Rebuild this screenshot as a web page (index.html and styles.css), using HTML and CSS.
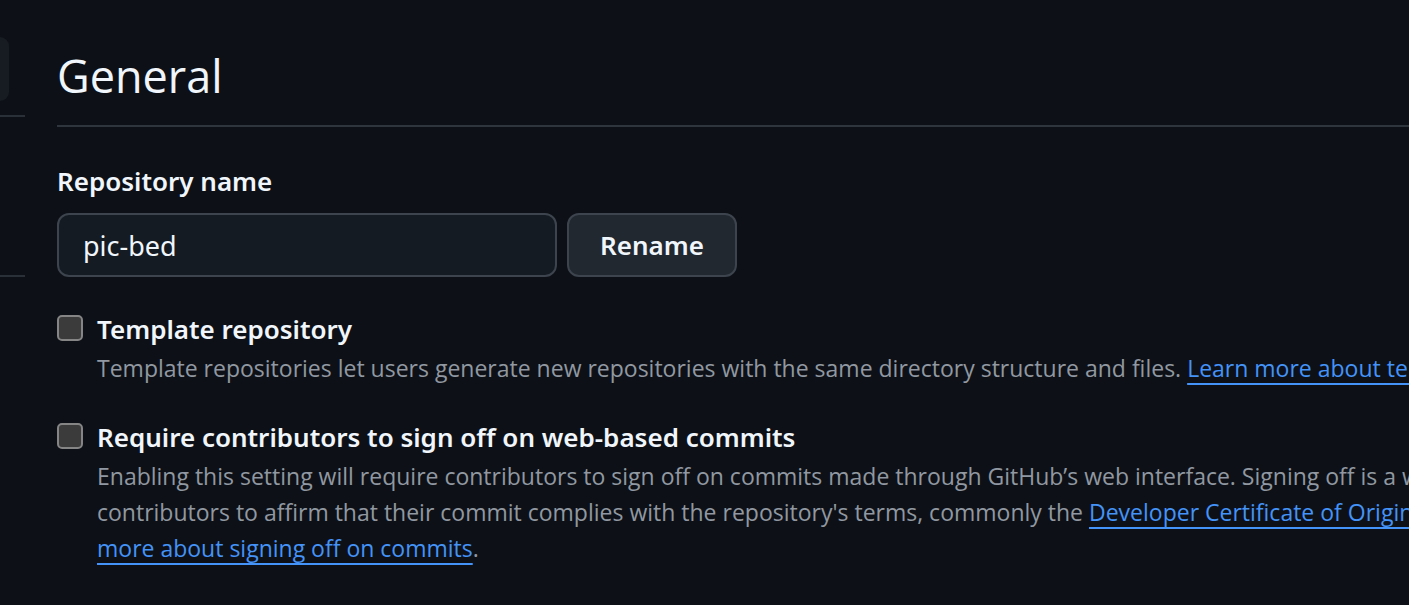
FILE: index.html
```html
<!DOCTYPE html>
<html lang="en">
<head>
<meta charset="utf-8">
<title>General settings</title>
<link rel="stylesheet" href="styles.css">
</head>
<body>
<div class="page">
  <aside class="sidebar" aria-label="Settings sections">
    <div class="nav-item"></div>
    <hr class="nav-divider">
    <hr class="nav-divider nav-divider-far">
  </aside>
  <main class="content">
    <h1 class="title">General</h1>
    <form class="rename">
      <label class="label" for="name">Repository name</label>
      <div class="row">
        <input class="text-input" id="name" type="text" value="pic-bed">
        <button class="button" type="button">Rename</button>
      </div>
    </form>
    <section class="option">
      <input class="check" id="template" type="checkbox">
      <div class="option-body">
        <label class="label" for="template">Template repository</label>
        <p class="note">Template repositories let users generate new repositories with the same directory structure and files. <a class="link" href="#">Learn more about templates</a></p>
      </div>
    </section>
    <section class="option">
      <input class="check" id="signoff" type="checkbox">
      <div class="option-body">
        <label class="label" for="signoff">Require contributors to sign off on web-based commits</label>
        <p class="note">Enabling this setting will require contributors to sign off on commits made through GitHub’s web interface. Signing off is a way<br>contributors to affirm that their commit complies with the repository's terms, commonly the <a class="link" href="#">Developer Certificate of Origin (</a><br><a class="link" href="#">more about signing off on commits</a>.</p>
      </div>
    </section>
  </main>
</div>
</body>
</html>
```
FILE: styles.css
```css
* { box-sizing: border-box; }
body {
  margin: 0;
  background: #0d1117;
  color: #f0f6fc;
  font-family: "Open Sans", "Noto Sans", sans-serif;
  font-variant-ligatures: none;
  overflow: hidden;
}
.page { display: flex; min-height: 100vh; }
.sidebar { flex: 0 0 25px; padding-top: 37px; }
.nav-item { width: 9px; height: 64px; background: #171b22; border-radius: 0 12px 12px 0; }
.nav-divider { margin: 14px 0 0; border: 0; height: 2px; background: #2a3038; }
.nav-divider-far { margin-top: 158px; }
.content { flex: 1; min-width: 0; padding: 40px 0 0 32px; }
.title {
  margin: 0;
  padding: 0 0 13px;
  border-bottom: 2px solid #2f353d;
  font-size: 45px;
  line-height: 72px;
  font-weight: 400;
}
.rename { padding: 36px 0 1px; }
.label { display: block; width: fit-content; font-family: "Noto Sans", sans-serif; font-size: 26px; line-height: 36px; font-weight: 600; }
.row { display: flex; gap: 10px; margin-top: 14px; }
.text-input {
  width: 500px;
  height: 64px;
  padding: 0 24px;
  border: 2px solid #3d444d;
  border-radius: 12px;
  background: #151b23;
  color: inherit;
  font: 400 27px/36px "Noto Sans", sans-serif;
}
.button {
  height: 64px;
  width: 170px;
  padding: 0;
  border: 2px solid #3d444d;
  border-radius: 12px;
  background: #212830;
  color: inherit;
  font: 600 26px/36px "Noto Sans", sans-serif;
}
.option { display: flex; gap: 14px; margin-top: 33px; }
.check {
  appearance: none;
  flex: none;
  width: 26px;
  height: 26px;
  margin: 4px 0 0;
  border: 2px solid #858585;
  border-radius: 5px;
  background: #3b3b3b;
}
.option-body { flex: 1; min-width: 0; white-space: nowrap; }
.note { margin: 3px 0 0; font-size: 23px; line-height: 36px; color: #9198a1; }
.link { color: #4493f8; text-decoration: underline; text-decoration-thickness: 2px; text-underline-offset: 6px; text-decoration-skip-ink: none; }
```
